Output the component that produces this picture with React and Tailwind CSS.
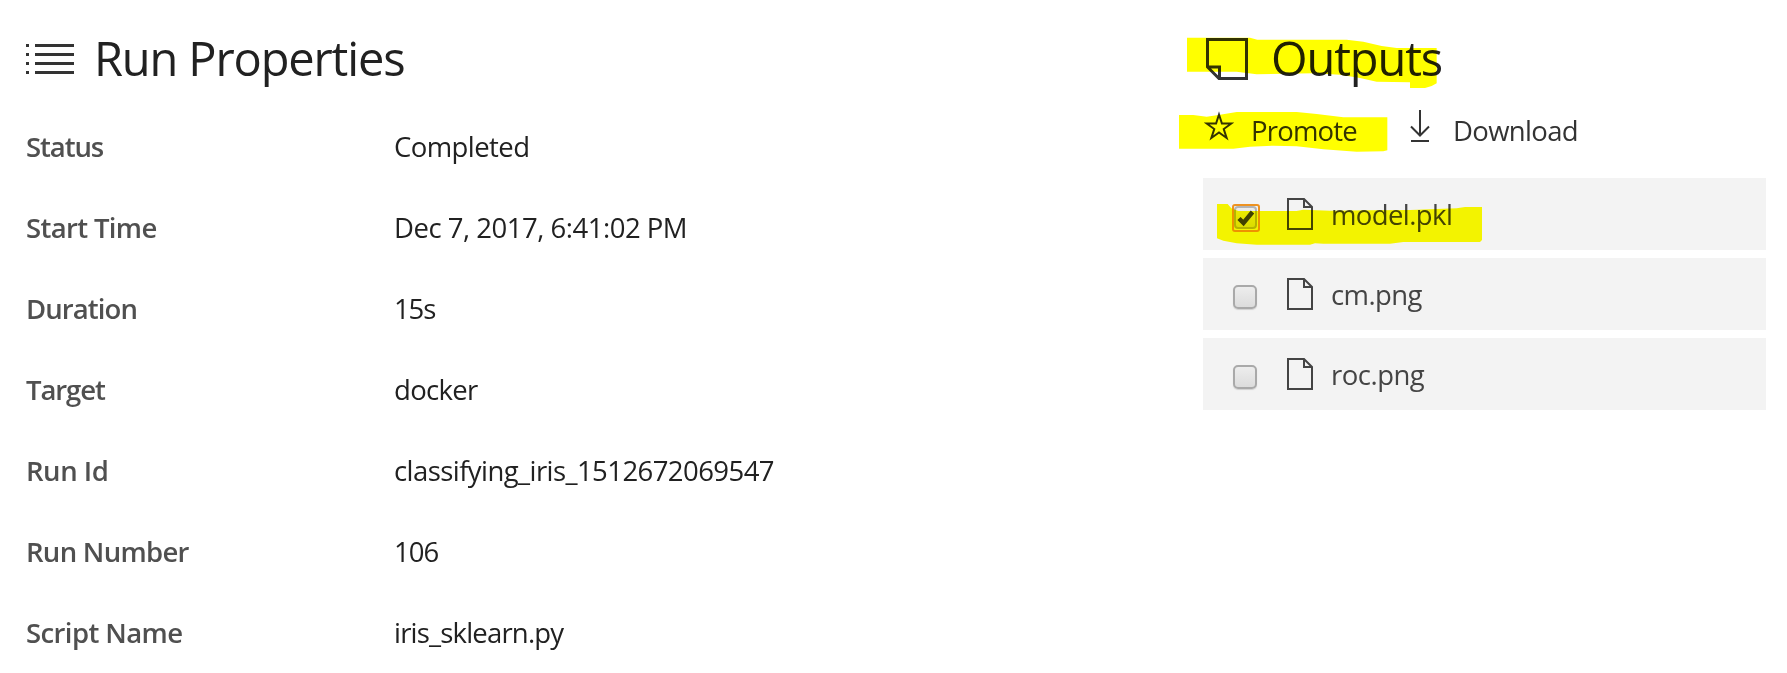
const properties = [
  { label: "Status", value: "Completed", labelFit: "tracking-[-1.1px]", valueFit: "tracking-[-0.57px]" },
  { label: "Start Time", value: "Dec 7, 2017, 6:41:02 PM", labelFit: "tracking-[-0.65px]", valueFit: "tracking-[-0.49px]" },
  { label: "Duration", value: "15s", labelFit: "tracking-[-0.9px]", valueFit: "tracking-[-1.1px]" },
  { label: "Target", value: "docker", labelFit: "tracking-[-1.1px]", valueFit: "tracking-[-0.68px]" },
  { label: "Run Id", value: "classifying_iris_1512672069547", labelFit: "tracking-[-0.45px]", valueFit: "tracking-[-0.57px]" },
  { label: "Run Number", value: "106", labelFit: "tracking-[-0.7px]", valueFit: "tracking-[-1px]" },
  { label: "Script Name", value: "iris_sklearn.py", labelFit: "tracking-[-0.6px]", valueFit: "tracking-[-0.81px]" },
];

const files = [
  { name: "model.pkl", checked: true, fit: "tracking-[-0.6px]" },
  { name: "cm.png", checked: false, fit: "tracking-[-0.6px]" },
  { name: "roc.png", checked: false, fit: "tracking-[-0.5px]" },
];

function ListIcon() {
  return (
    <svg width="48" height="30" viewBox="0 0 48 30" fill="#333" shapeRendering="crispEdges">
      {[0, 9, 18, 27].map((y) => (
        <g key={y}>
          <rect x="0" y={y} width="3" height="3" />
          <rect x="9" y={y} width="39" height="3" />
        </g>
      ))}
    </svg>
  );
}

function NoteIcon() {
  return (
    <svg width="42" height="42" viewBox="0 0 42 42" fill="none" stroke="#333" strokeWidth="3">
      <path d="M1.500 29V1.500h39v39H13L1.500 29h12v11.500" />
    </svg>
  );
}

function StarIcon() {
  return (
    <svg width="30" height="31" viewBox="0 0 30 31" fill="none" stroke="#333" strokeWidth="2">
      <path d="M15 3.500L17.920 12.500H27.360L19.730 18.040L22.640 27L15 21.470L7.360 27L10.270 18.040L2.640 12.500H12.080Z" />
    </svg>
  );
}

function DownloadIcon() {
  return (
    <svg width="20" height="32" viewBox="0 0 20 32" fill="none" stroke="#333" strokeWidth="2">
      <path d="M10 0v25M1 16.500l9 9 9-9M1 31h18" />
    </svg>
  );
}

function FileIcon() {
  return (
    <svg width="26" height="32" viewBox="0 0 26 32" fill="none" stroke="#444" strokeWidth="2">
      <path d="M17 1H1v30h24V9zM17 1v8h8" />
    </svg>
  );
}

function Checkbox({ checked }) {
  if (checked) {
    return (
      <span className="flex size-7 rounded-[3px] border-2 border-[#ee9220]">
        <span className="flex size-[23px] shrink-0 items-center justify-center rounded-[4px] border-2 border-[#b4b4b4] bg-linear-to-b from-[#ededed] to-[#dcdcdc]">
          <svg className="shrink-0" width="18" height="18" viewBox="0 0 18 18" fill="none" stroke="#404040" strokeWidth="4.500">
            <path d="M2 9.500l4.500 4.500L15.500 3" />
          </svg>
        </span>
      </span>
    );
  }
  return (
    <span className="flex size-7 p-px">
      <span className="size-6 shrink-0 rounded-[5px] border-2 border-[#a9a9a9] bg-linear-to-b from-[#ededed] to-[#dcdcdc] shadow-[0_1px_1px_#d0d0d0]" />
    </span>
  );
}

export default function App() {
  return (
    <main className="relative flex h-[673px] w-[1787px] overflow-hidden bg-white font-['Open_Sans','Noto_Sans',sans-serif]">
      <section className="w-[1203px] pl-[26px] pt-[28px]">
        <header className="flex h-[62px] items-center gap-5">
          <ListIcon />
          <h1 className="whitespace-nowrap pb-0.5 text-[47px] leading-[62px] tracking-[-1.14px] text-[#212121]">Run Properties</h1>
        </header>
        <dl className="mt-4">
          {properties.map((p) => (
            <div key={p.label} className="flex h-[81px] items-center whitespace-nowrap text-[27.5px]">
              <dt className={`w-[368px] font-semibold text-[#505050] ${p.labelFit}`}>{p.label}</dt>
              <dd className={`text-[#212121] ${p.valueFit}`}>{p.value}</dd>
            </div>
          ))}
        </dl>
      </section>

      <section className="w-[563px] pt-[28px]">
        <header className="flex h-[62px] items-center gap-[23px] pl-[3px]">
          <NoteIcon />
          <h2 className="pb-0.5 text-[47px] leading-[62px] tracking-[-1.1px] text-[#212121]">Outputs</h2>
        </header>
        <div className="mt-4 flex h-10 items-start text-[27.5px] leading-[50px] text-[#333]">
          <button className="flex items-start gap-[17px] pl-px">
            <span className="pt-[5px]"><StarIcon /></span>
            <span className="tracking-[-0.8px]">Promote</span>
          </button>
          <button className="ml-[53px] flex items-start gap-[23px]">
            <span className="pt-1"><DownloadIcon /></span>
            <span className="tracking-[-0.65px]">Download</span>
          </button>
        </div>
        <ul className="mt-8 flex flex-col gap-2">
          {files.map((f) => (
            <li key={f.name} className="flex h-[72px] items-start bg-[#f3f3f3] pl-[29px] text-[27.5px] text-[#444]">
              <span className="pt-[26px]"><Checkbox checked={f.checked} /></span>
              <span className="ml-[27px] pt-5"><FileIcon /></span>
              <span className={`ml-[18px] leading-[74px] ${f.fit}`}>{f.name}</span>
            </li>
          ))}
        </ul>
      </section>

      <svg
        className="pointer-events-none absolute left-[1170px] top-[20px] mix-blend-multiply"
        width="330"
        height="240"
        viewBox="0 0 990 720"
        fill="#ff0"
      >
        <path d="M51 53H240L262 59H530L580 65L635 78L680 84H800V190L785 198L765 204H720V187L620 185L570 174L510 164L430 160L260 163L200 155H51Z" />
        <path d="M27 285H70L110 290L150 284L200 276H380L440 282L520 292H652V391L640 394L560 395L460 388L380 379L310 377L240 380L190 386H27Z" />
        <path d="M141 552H173L184 565L205 573H380L400 569L480 572L600 571L720 570L860 565L885 561H936V660L930 666H700L660 671H460L435 670L420 674H260L200 670L160 662L141 655Z" />
      </svg>
    </main>
  );
}
